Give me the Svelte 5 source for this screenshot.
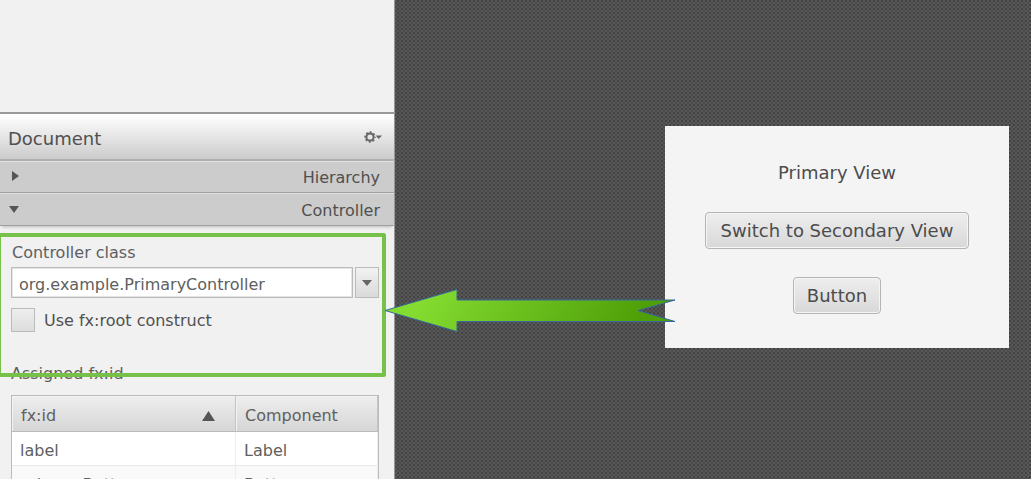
<script lang="ts">
  let controller = $state('org.example.PrimaryController');
  let useRoot = $state(false);
  const rows = [
    { id: 'label', component: 'Label' },
    { id: 'primaryButton', component: 'Button' }
  ];
</script>

<div class="app">
  <aside class="sidebar">
    <div class="library"></div>
    <header class="title">
      <h1>Document</h1>
      <button class="gear" aria-label="Document options">
        <svg width="20" height="14" viewBox="0 0 20 14" aria-hidden="true">
          <circle cx="7" cy="7" r="3.6" fill="none" stroke="#666" stroke-width="2" />
          <circle cx="7" cy="7" r="4.9" fill="none" stroke="#666" stroke-width="1.6" stroke-dasharray="1.95 1.9" stroke-dashoffset="0.95" />
          <path d="M12.500 5.500h6.500l-3.200 3.500z" fill="#666" />
        </svg>
      </button>
    </header>
    <button class="section" aria-expanded="false">
      <svg width="12" height="12" viewBox="0 0 12 12" aria-hidden="true"><path d="M4 1l7 5-7 5z" fill="#555" /></svg>
      <span>Hierarchy</span>
    </button>
    <button class="section" aria-expanded="true">
      <svg width="12" height="12" viewBox="0 0 12 12" aria-hidden="true"><path d="M1 3h10l-5 7z" fill="#555" /></svg>
      <span>Controller</span>
    </button>
    <div class="body">
      <label class="caption" for="controller">Controller class</label>
      <div class="combo">
        <input id="controller" type="text" bind:value={controller} />
        <button aria-label="Show controller classes">
          <svg width="10" height="6" viewBox="0 0 10 6" aria-hidden="true"><path d="M0 0h10L5 6z" fill="#666" /></svg>
        </button>
      </div>
      <label class="check"><input type="checkbox" bind:checked={useRoot} /><span>Use fx:root construct</span></label>
      <div class="assigned">Assigned fx:id</div>
      <table>
        <thead>
          <tr>
            <th><div>fx:id
              <svg width="13" height="10" viewBox="0 0 13 10" aria-hidden="true"><path d="M0 10L6.500 0 13 10z" fill="#555" /></svg></div>
            </th>
            <th><div>Component</div></th>
          </tr>
        </thead>
        <tbody>
          {#each rows as row}
            <tr><td>{row.id}</td><td>{row.component}</td></tr>
          {/each}
        </tbody>
      </table>
    </div>
    <div class="highlight"></div>
    <svg class="arrow" width="292" height="46" viewBox="0 0 292 46" aria-hidden="true">
      <defs>
        <linearGradient id="leaf" gradientUnits="userSpaceOnUse" x1="50" y1="-10" x2="220" y2="90">
          <stop offset="0" stop-color="#84dc30" />
          <stop offset="1" stop-color="#4f9f08" />
        </linearGradient>
      </defs>
      <path d="M1 22.500L73 1.500V12H291L254 22.500 291 33.500H73V43.500Z" fill="url(#leaf)" stroke="#38699c" stroke-width="1" />
    </svg>
  </aside>
  <main class="canvas">
    <section class="preview">
      <p>Primary View</p>
      <button>Switch to Secondary View</button>
      <button>Button</button>
    </section>
  </main>
</div>

<style>
  :global(body) {
    margin: 0;
  }
  .app {
    display: flex;
    height: 100vh;
    overflow: hidden;
    font: 16px/20px "DejaVu Sans", sans-serif;
    color: #606060;
  }
  .app * {
    box-sizing: border-box;
  }
  button,
  input {
    font: inherit;
    color: inherit;
    margin: 0;
  }
  .sidebar {
    position: relative;
    flex: 0 0 395px;
    background: #f1f1f1;
    border-right: 1px solid #999;
  }
  .library {
    height: 112px;
  }
  .title {
    display: flex;
    align-items: center;
    justify-content: space-between;
    height: 49px;
    padding: 4px 11px 0 8px;
    border-top: 2px solid #999;
    border-bottom: 2px solid #b0b0b0;
    background: linear-gradient(#fff, #ccc);
  }
  h1 {
    margin: 0;
    font-size: 18px;
    line-height: 24px;
    font-weight: 400;
    color: #505050;
  }
  .gear {
    display: flex;
    padding: 0 0 4px;
    border: 0;
    background: none;
  }
  .section {
    display: flex;
    justify-content: space-between;
    align-items: center;
    width: 100%;
    height: 32px;
    padding: 2px 14px 0 8px;
    border: 0;
    border-top: 1px solid #e2e2e2;
    border-bottom: 1px solid #a0a0a0;
    background: #ccc;
    color: #505050;
  }
  .section + .section {
    height: 33px;
    box-shadow: 0 3px 3px -2px #bbb;
  }
  .section svg {
    margin-bottom: 4px;
  }
  .body {
    padding: 17px 15px 0 11px;
  }
  .caption {
    display: block;
    padding-left: 1px;
    margin-bottom: 4px;
  }
  .combo {
    display: flex;
    gap: 2px;
    height: 31px;
  }
  .combo input {
    flex: 1;
    min-width: 0;
    padding: 4px 7px 0;
    border: 1px solid #bbb;
    box-shadow: inset 0 0 0 1px #e4e4e4;
    background: #fff;
    outline: 0;
  }
  .combo button {
    display: flex;
    align-items: center;
    justify-content: center;
    width: 24px;
    padding: 0;
    border: 1px solid #bbb;
    background: linear-gradient(#f2f2f2, #dadada);
  }
  .check {
    display: flex;
    align-items: center;
    gap: 9px;
    margin-top: 10px;
    color: #505050;
  }
  .check span {
    padding-top: 2px;
  }
  .check input {
    appearance: none;
    width: 24px;
    height: 24px;
    border: 1px solid #bbb;
    background: linear-gradient(#eee, #ddd);
  }
  .check input:checked {
    background: #777;
  }
  .assigned {
    margin: 32px 0 11px;
  }
  table {
    width: 100%;
    table-layout: fixed;
    border-collapse: separate;
    border-spacing: 0;
    border: 1px solid #bbb;
    background: #fff;
  }
  th {
    height: 36px;
    padding: 4px 9px 0;
    border-bottom: 1px solid #bbb;
    border-right: 1px solid #c4c4c4;
    box-shadow: inset 1px 1px #f3f3f3;
    background: linear-gradient(#eee, #d6d6d6);
    text-align: left;
    font-weight: 400;
  }
  th:first-child {
    width: 224px;
  }
  th div {
    display: flex;
    justify-content: space-between;
    align-items: center;
    padding-right: 11px;
  }
  td {
    height: 34px;
    padding: 4px 8px 0;
    border-bottom: 1px solid #e8e8e8;
    border-right: 1px solid #eee;
  }
  tbody tr:nth-child(even) {
    background: #f9f9f9;
  }
  .highlight {
    position: absolute;
    top: 233px;
    left: -2px;
    right: 8px;
    height: 144px;
    border: 4px solid #76c248;
    border-left-width: 3px;
    border-radius: 2px;
    pointer-events: none;
  }
  .arrow {
    position: absolute;
    z-index: 2;
    left: 384px;
    top: 288px;
    pointer-events: none;
  }
  .canvas {
    flex: 1;
    padding: 126px 22px 0 0;
    background-color: #4c4c4c;
    background-image: conic-gradient(#424242 25%, #585858 0 50%, #4a4a4a 0 75%, #585858 0);
    background-size: 4px 4px;
  }
  .preview {
    display: flex;
    flex-direction: column;
    align-items: center;
    width: 344px;
    margin-left: auto;
    padding: 35px 20px 34px;
    background: #f4f4f4;
    font-size: 18px;
    line-height: 24px;
    color: #4c4c4c;
  }
  .preview p {
    margin: 0 0 27px;
  }
  .preview button {
    height: 37px;
    padding: 0 15px;
    border: 1px solid #b4b4b4;
    border-radius: 4px;
    box-shadow: inset 0 0 0 1px #f5f5f5;
    background: linear-gradient(#eee, #d8d8d8);
  }
  .preview button + button {
    padding: 0 13px;
    margin-top: 28px;
  }
</style>
